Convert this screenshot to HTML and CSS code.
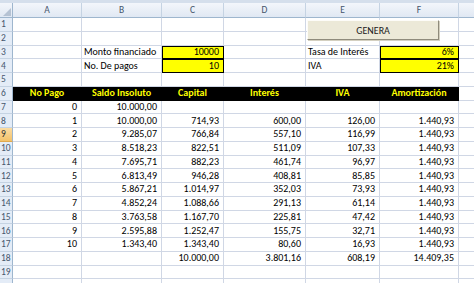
FILE: index.html
```html
<!DOCTYPE html>
<html lang="es">
<head>
    <meta charset="UTF-8">
    <title>Amortizacion</title>
    <link rel="stylesheet" href="styles.css">
</head>
<body>
    <div class="topbar"></div>
    <div class="wrap">
        <table class="sheet">
            <colgroup>
                <col class="c-num"><col class="c-a"><col class="c-b"><col class="c-c"><col class="c-d"><col class="c-e"><col class="c-f"><col class="c-g">
            </colgroup>
            <tr class="cols">
                <th class="corner"><svg width="8" height="8" viewBox="0 0 8 8"><polygon points="8,0 8,8 0,8" fill="#b5c2d3"/></svg></th>
                <th>A</th><th>B</th><th>C</th><th>D</th><th>E</th><th>F</th><th></th>
            </tr>
            <tr><th>1</th><td></td><td></td><td></td><td></td><td></td><td></td><td></td></tr>
            <tr><th>2</th><td></td><td></td><td></td><td></td><td></td><td></td><td></td></tr>
            <tr><th>3</th><td></td><td class="txt">Monto financiado</td><td class="inp">10000</td><td></td><td class="txt">Tasa de Interés</td><td class="inp">6%</td><td></td></tr>
            <tr><th>4</th><td></td><td class="txt">No. De pagos</td><td class="inp">10</td><td></td><td class="txt">IVA</td><td class="inp">21%</td><td></td></tr>
            <tr><th>5</th><td></td><td></td><td></td><td></td><td></td><td></td><td></td></tr>
            <tr class="head"><th>6</th><td>No Pago</td><td>Saldo Insoluto</td><td>Capital</td><td>Interés</td><td>IVA</td><td>Amortización</td><td class="blank"></td></tr>
            <tr><th>7</th><td>0</td><td>10.000,00</td><td></td><td></td><td></td><td></td><td></td></tr>
            <tr><th>8</th><td>1</td><td>10.000,00</td><td>714,93</td><td>600,00</td><td>126,00</td><td>1.440,93</td><td></td></tr>
            <tr><th class="active">9</th><td>2</td><td>9.285,07</td><td>766,84</td><td>557,10</td><td>116,99</td><td>1.440,93</td><td></td></tr>
            <tr><th>10</th><td>3</td><td>8.518,23</td><td>822,51</td><td>511,09</td><td>107,33</td><td>1.440,93</td><td></td></tr>
            <tr><th>11</th><td>4</td><td>7.695,71</td><td>882,23</td><td>461,74</td><td>96,97</td><td>1.440,93</td><td></td></tr>
            <tr><th>12</th><td>5</td><td>6.813,49</td><td>946,28</td><td>408,81</td><td>85,85</td><td>1.440,93</td><td></td></tr>
            <tr><th>13</th><td>6</td><td>5.867,21</td><td>1.014,97</td><td>352,03</td><td>73,93</td><td>1.440,93</td><td></td></tr>
            <tr><th>14</th><td>7</td><td>4.852,24</td><td>1.088,66</td><td>291,13</td><td>61,14</td><td>1.440,93</td><td></td></tr>
            <tr><th>15</th><td>8</td><td>3.763,58</td><td>1.167,70</td><td>225,81</td><td>47,42</td><td>1.440,93</td><td></td></tr>
            <tr><th>16</th><td>9</td><td>2.595,88</td><td>1.252,47</td><td>155,75</td><td>32,71</td><td>1.440,93</td><td></td></tr>
            <tr><th>17</th><td>10</td><td>1.343,40</td><td>1.343,40</td><td>80,60</td><td>16,93</td><td>1.440,93</td><td></td></tr>
            <tr><th>18</th><td></td><td></td><td>10.000,00</td><td>3.801,16</td><td>608,19</td><td>14.409,35</td><td></td></tr>
            <tr><th>19</th><td></td><td></td><td></td><td></td><td></td><td></td><td></td></tr>
            <tr><th></th><td></td><td></td><td></td><td></td><td></td><td></td><td></td></tr>
        </table>
        <button class="genera">GENERA</button>
    </div>
</body>
</html>
```

FILE: styles.css
```css
html, body{margin:0;padding:0;background:#fff;overflow:hidden;}
body{font-family:"Carlito","Liberation Sans",Arial,sans-serif;font-size:10px;color:#000;}

.topbar{height:3px;background:#d5dfec;}
.wrap{position:relative;}

.sheet{border-collapse:separate;border-spacing:0;table-layout:fixed;width:489px;}
.c-num{width:13px}
.c-a{width:69px}
.c-b{width:80px}
.c-c{width:62px}
.c-d{width:82px}
.c-e{width:74px}
.c-f{width:79px}
.c-g{width:30px}

.sheet th, .sheet td{
    box-sizing:border-box;
    height:13.75px;
    padding:0 4px 0 2px;
    line-height:12px;
    white-space:nowrap;
    overflow:hidden;
    text-align:right;
    border-right:1px solid #d0d7e5;
    border-bottom:1px solid #d0d7e5;
}

.sheet th{
    font-weight:normal;
    color:#46566c;
    background:#e4ecf7;
    border-right-color:#9eb6ce;
    border-bottom-color:#c5d3e3;
    padding:0 0 0 1px;
    text-align:left;
    font-size:9.5px;
}
.sheet tr.cols th{
    height:15px;
    text-align:center;
    padding:0;
    background:linear-gradient(#f3f6fb,#e0e8f3);
    border-right-color:#c5d3e3;
    border-bottom-color:#9eb6ce;
}
.sheet tr.cols th.corner{border-right-color:#9eb6ce;text-align:right;vertical-align:bottom;line-height:8px;}
.sheet tr.cols th.corner svg{display:block;margin:0 1px 1px auto;}
.sheet th.active{background:linear-gradient(#fbdca3,#f3c26a);color:#2b2b2b;border-bottom-color:#e0a94e;}

.sheet td.txt{text-align:left;}
.sheet td.inp{
    background:#ffff00;
    border-right-color:#000;
    border-bottom-color:#000;
    box-shadow:inset 1px 1px 0 #000;
}

.head td{
    background:#000;
    color:#ffff00;
    font-weight:bold;
    text-align:center;
    padding:0;
    border-color:#000;
}
.head td.blank{background:#fff;border-right-color:#d0d7e5;border-bottom-color:#d0d7e5;}

.genera{
    position:absolute;
    left:307px;
    top:17px;
    width:132px;
    height:20px;
    margin:0;
    padding:0;
    font-family:"Carlito","Liberation Sans",Arial,sans-serif;
    font-size:10px;
    color:#222;
    background:#ece9d8;
    border:1px solid;
    border-color:#fdfcf8 #8f8b7c #8f8b7c #fdfcf8;
    box-shadow:1px 1px 0 #d4d0c0;
}
```
